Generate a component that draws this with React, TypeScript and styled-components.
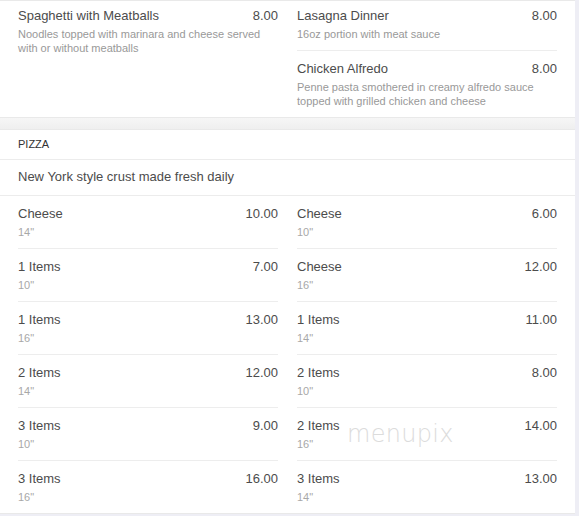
import React from 'react';
import styled, { createGlobalStyle } from 'styled-components';

const GlobalStyle = createGlobalStyle`
  html, body {
    margin: 0;
    padding: 0;
    background: #eeeef5;
    overflow: hidden;
  }
  body {
    font-family: "Liberation Sans", Arial, sans-serif;
    color: #4c4c4c;
  }
`;

interface MenuItem {
  name: string;
  price: string;
  note: string;
}

const pastaLeft: MenuItem[] = [
  {
    name: 'Spaghetti with Meatballs',
    price: '8.00',
    note: 'Noodles topped with marinara and cheese served with or without meatballs'
  }
];

const pastaRight: MenuItem[] = [
  { name: 'Lasagna Dinner', price: '8.00', note: '16oz portion with meat sauce' },
  {
    name: 'Chicken Alfredo',
    price: '8.00',
    note: 'Penne pasta smothered in creamy alfredo sauce topped with grilled chicken and cheese'
  }
];

const pizzaLeft: MenuItem[] = [
  { name: 'Cheese', price: '10.00', note: '14"' },
  { name: '1 Items', price: '7.00', note: '10"' },
  { name: '1 Items', price: '13.00', note: '16"' },
  { name: '2 Items', price: '12.00', note: '14"' },
  { name: '3 Items', price: '9.00', note: '10"' },
  { name: '3 Items', price: '16.00', note: '16"' }
];

const pizzaRight: MenuItem[] = [
  { name: 'Cheese', price: '6.00', note: '10"' },
  { name: 'Cheese', price: '12.00', note: '16"' },
  { name: '1 Items', price: '11.00', note: '14"' },
  { name: '2 Items', price: '8.00', note: '10"' },
  { name: '2 Items', price: '14.00', note: '16"' },
  { name: '3 Items', price: '13.00', note: '14"' }
];

const Page = styled.div`
  width: 575px;
  display: flex;
  flex-direction: column;
  background: #f3f3f3;
`;

const Card = styled.section`
  position: relative;
  background: #fff;
  border-top: 1px solid #e9e9e9;
  border-bottom: 1px solid #e9e9e9;
`;

const Spacer = styled.div`
  height: 11px;
  background: linear-gradient(#f6f6f6, #efefef);
`;

const Columns = styled.div<{ $scrolled?: boolean }>`
  display: grid;
  grid-template-columns: 260px 260px;
  column-gap: 19px;
  padding: 0 18px;

  ${({ $scrolled }) =>
    $scrolled &&
    `
    & > div > article:first-child { padding-top: 7px; }
  `}
`;

const Column = styled.div`
  display: flex;
  flex-direction: column;
`;

const Item = styled.article`
  padding: 10px 0 9px;
  border-bottom: 1px solid #ededed;

  &:last-child {
    border-bottom: none;
  }
`;

const ItemHead = styled.div`
  display: flex;
  justify-content: space-between;
  font-size: 13px;
  line-height: 16px;
  color: #4c4c4c;
`;

const Note = styled.p<{ $size?: boolean }>`
  margin: 3px 0 0;
  font-size: 11px;
  line-height: 14px;
  color: ${({ $size }) => ($size ? '#a8a8a8' : '#999')};
`;

const SectionTitle = styled.h2`
  margin: 0;
  padding: 7px 18px 8px;
  font-size: 11px;
  line-height: 14px;
  font-weight: normal;
  color: #333;
  border-bottom: 1px solid #ececec;
`;

const SectionBlurb = styled.p`
  margin: 0;
  padding: 9px 18px 10px;
  font-size: 13px;
  line-height: 16px;
  color: #4c4c4c;
  border-bottom: 1px solid #ececec;
`;

const Watermark = styled.span`
  position: absolute;
  left: 347px;
  top: 290px;
  font-family: "DejaVu Sans", sans-serif;
  font-size: 24px;
  font-weight: 200;
  letter-spacing: 0.3px;
  color: #dcdcdc;
  pointer-events: none;
`;

const MenuList: React.FC<{ items: MenuItem[]; sizes?: boolean }> = ({ items, sizes }) => (
  <Column>
    {items.map((item, i) => (
      <Item key={i}>
        <ItemHead>
          <span>{item.name}</span>
          <span>{item.price}</span>
        </ItemHead>
        <Note $size={sizes}>{item.note}</Note>
      </Item>
    ))}
  </Column>
);

export default function App() {
  return (
    <>
      <GlobalStyle />
      <Page>
        <Card>
          <Columns $scrolled>
            <MenuList items={pastaLeft} />
            <MenuList items={pastaRight} />
          </Columns>
        </Card>
        <Spacer />
        <Card>
          <SectionTitle>PIZZA</SectionTitle>
          <SectionBlurb>New York style crust made fresh daily</SectionBlurb>
          <Columns>
            <MenuList items={pizzaLeft} sizes />
            <MenuList items={pizzaRight} sizes />
          </Columns>
          <Watermark>menupix</Watermark>
        </Card>
      </Page>
    </>
  );
}
